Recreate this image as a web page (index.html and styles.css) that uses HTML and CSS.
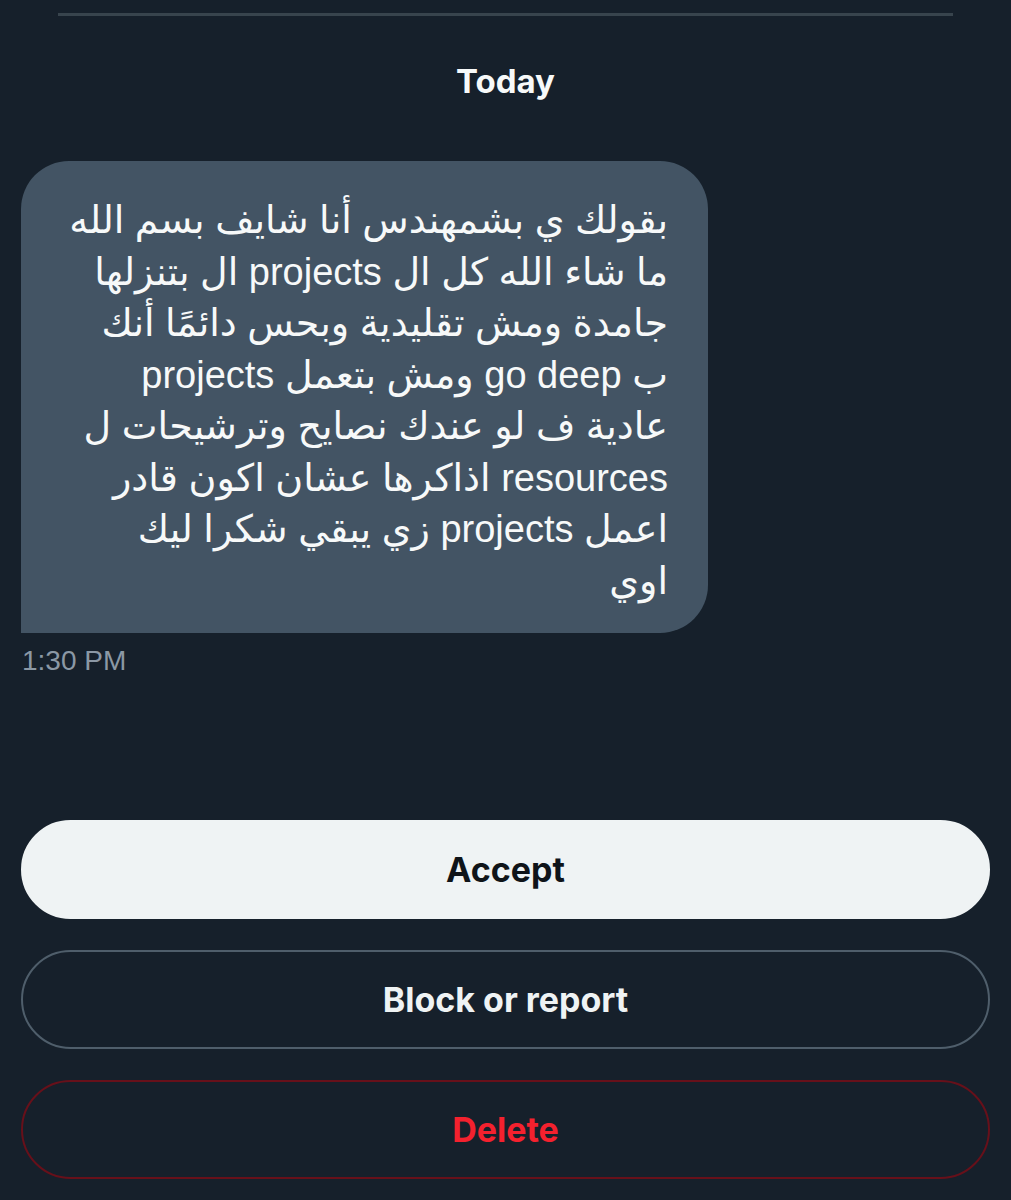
FILE: index.html
```html
<!DOCTYPE html>
<html lang="ar">
<head>
    <meta charset="UTF-8">
    <meta name="viewport" content="width=device-width, initial-scale=1.0">
    <title>Message request</title>
    <link rel="stylesheet" href="styles.css">
</head>
<body>
    <div class="divider"></div>
    <p class="day">Today</p>

    <div class="thread">
        <div class="bubble" dir="rtl">
            بقولك ي بشمهندس أنا شايف بسم الله<br>
            ما شاء الله كل ال projects ال بتنزلها<br>
            جامدة ومش تقليدية وبحس دائمًا أنك<br>
            ب go deep ومش بتعمل projects<br>
            عادية ف لو عندك نصايح وترشيحات ل<br>
            resources اذاكرها عشان اكون قادر<br>
            اعمل projects زي يبقي شكرا ليك<br>
            اوي
        </div>
        <p class="time">1:30 PM</p>
    </div>

    <div class="actions">
        <button class="btn accept">Accept</button>
        <button class="btn block">Block or report</button>
        <button class="btn delete">Delete</button>
    </div>
</body>
</html>
```

FILE: styles.css
```css
body {
    margin: 0;
    background-color: #16202b;
    color: #f7f9f9;
    font-family: Inter, "DejaVu Sans", sans-serif;
    width: 1011px;
    height: 1200px;
    overflow: hidden;
}
.divider {
    height: 3px;
    margin: 13px 58px 0 58px;
    background-color: #38444d;
}
.day {
    margin: 43px 0 0 0;
    text-align: center;
    font-size: 33px;
    font-weight: bold;
    line-height: 44px;
}
.thread {
    padding: 0 21px;
    margin-top: 58px;
}
.bubble {
    width: 687px;
    box-sizing: border-box;
    padding: 34px 40px 26px 10px;
    background-color: #435464;
    border-radius: 48px 48px 48px 0;
    font-family: "Liberation Sans", "DejaVu Sans", sans-serif;
    font-size: 38px;
    line-height: 51.5px;
    text-align: right;
    white-space: nowrap;
}
.time {
    margin: 12px 0 0 1px;
    font-family: "Liberation Sans", sans-serif;
    font-size: 28px;
    color: #8b98a5;
}
.actions {
    display: flex;
    flex-direction: column;
    gap: 31px;
    padding: 0 21px;
    margin-top: 143px;
}
.btn {
    height: 99px;
    border-radius: 50px;
    font-family: Inter, sans-serif;
    font-size: 34px;
    font-weight: bold;
    background: none;
    color: #eff3f4;
    border: 2px solid #4f5e6b;
}
.accept {
    background-color: #eff3f4;
    border-color: #eff3f4;
    color: #0f1419;
}
.delete {
    border-color: #67101a;
    color: #f4212e;
}
```
